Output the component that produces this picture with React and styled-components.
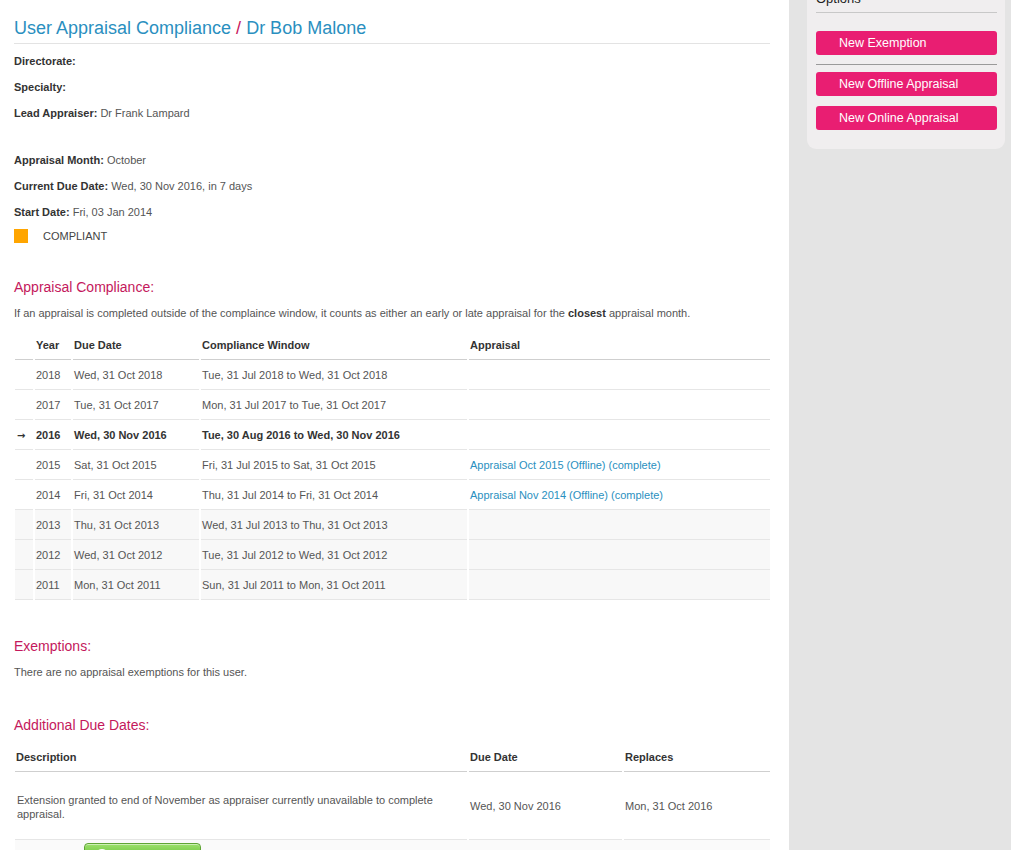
import React from "react";
import styled, { createGlobalStyle } from "styled-components";

const GlobalStyle = createGlobalStyle`
  html, body { margin: 0; padding: 0; background: #fff; }
  body {
    font-family: "Liberation Sans", Arial, Helvetica, sans-serif;
    font-size: 11px;
    color: #555;
  }
`;

const Page = styled.div`
  display: flex;
  height: 850px;
  overflow: hidden;
`;

const Main = styled.main`
  flex: 1;
  min-width: 0;
  padding: 0 19px 0 14px;
`;

const Sidebar = styled.aside`
  width: 222px;
  flex-shrink: 0;
  background: #e4e4e4;
  padding: 0 6px 0 18px;
  box-sizing: border-box;
`;

const Panel = styled.div`
  margin-top: -14px;
  background: #f0eeef;
  border-radius: 0 0 9px 9px;
  padding: 0 8px 19px 9px;
`;

const PanelTitle = styled.div`
  font-size: 13px;
  line-height: 16px;
  color: #222;
  padding: 5px 0 5px;
  border-bottom: 1px solid #c8c8c8;
`;

const PinkButton = styled.button`
  display: block;
  width: 100%;
  height: 24px;
  margin-top: ${(p) => p.$mt}px;
  background: #e91e72;
  border: none;
  border-radius: 3px;
  color: #fff;
  font-family: "Liberation Sans", Arial, sans-serif;
  font-size: 12.5px;
  text-align: left;
  padding: 0 0 0 23px;
  cursor: pointer;
`;

const Separator = styled.div`
  margin-top: 9px;
  border-top: 1px solid #9a9a9a;
`;

const Title = styled.h1`
  margin: 0;
  padding: 17px 0 4px;
  font-size: 18px;
  line-height: 22px;
  font-weight: normal;
  color: #2a8fc0;
  border-bottom: 1px solid #e3e3e3;
`;

const Slash = styled.span`
  color: #c8175d;
`;

const InfoBlock = styled.div`
  margin-top: ${(p) => p.$mt}px;
`;

const InfoLine = styled.div`
  line-height: 26px;
  height: 26px;
  color: #555;
`;

const Label = styled.b`
  color: #333;
`;

const StatusRow = styled.div`
  display: flex;
  align-items: center;
  margin-top: 4px;
  height: 14px;
  gap: 15px;
  color: #444;
`;

const StatusSwatch = styled.span`
  width: 14px;
  height: 14px;
  background: #ffa500;
  display: inline-block;
`;

const SectionHeading = styled.h2`
  margin: ${(p) => p.$mt}px 0 0;
  font-size: 14px;
  line-height: 18px;
  font-weight: normal;
  color: #c4185c;
`;

const Para = styled.p`
  margin: 10px 0 0;
  line-height: 14px;
  color: #555;
`;

const Table = styled.table`
  border-collapse: separate;
  border-spacing: 2px 0;
  table-layout: fixed;
  width: calc(100% + 3px);
  margin: ${(p) => p.$mt}px 0 0 -1px;
`;

const Th = styled.th`
  text-align: left;
  font-weight: bold;
  color: #333;
  padding: 9px 2px 7px 1px;
  line-height: 13px;
  border-bottom: 1px solid #cfcfcf;
  vertical-align: middle;
`;

const Tr = styled.tr`
  background: ${(p) => (p.$shaded ? "#f8f8f8" : "transparent")};
`;

const Td = styled.td`
  padding: 9px 2px 7px 1px;
  line-height: 13px;
  border-bottom: 1px solid #e6e6e6;
  vertical-align: middle;
  color: ${(p) => (p.$strong ? "#333" : "#555")};
  font-weight: ${(p) => (p.$strong ? "bold" : "normal")};
  white-space: nowrap;
`;

const Arrow = styled.span`
  font-family: "DejaVu Sans", sans-serif;
  font-size: 10px;
  font-weight: bold;
  color: #333;
  padding-left: 1px;
`;

const DescTd = styled.td`
  padding: 21px 2px 18px 2px;
  line-height: 14px;
  border-bottom: 1px solid #e6e6e6;
  vertical-align: middle;
  color: #555;
`;

const PlainTd = styled.td`
  padding: 0 2px 0 1px;
  border-bottom: 1px solid #e6e6e6;
  vertical-align: middle;
  color: #555;
`;

const Link = styled.a`
  color: #2a90c0;
  text-decoration: none;
`;

const FooterBar = styled.div`
  background: #fafafa;
  padding: 3px 0 0 69px;
  margin-left: 1px;
`;

const GreenButton = styled.button`
  display: inline-flex;
  align-items: center;
  gap: 6px;
  width: 117px;
  height: 26px;
  border: 1px solid #5fa535;
  border-radius: 4px;
  background: linear-gradient(#9be06a, #6cc23c 55%, #58ad2c);
  box-shadow: inset 0 1px 0 rgba(255, 255, 255, 0.5);
  color: #fff;
  font-family: "Liberation Sans", Arial, sans-serif;
  font-size: 12px;
  font-weight: bold;
  padding: 0 0 0 10px;
  text-shadow: 0 -1px 0 rgba(0, 0, 0, 0.2);
`;

const complianceRows = [
  { year: "2018", due: "Wed, 31 Oct 2018", window: "Tue, 31 Jul 2018 to Wed, 31 Oct 2018" },
  { year: "2017", due: "Tue, 31 Oct 2017", window: "Mon, 31 Jul 2017 to Tue, 31 Oct 2017" },
  { year: "2016", due: "Wed, 30 Nov 2016", window: "Tue, 30 Aug 2016 to Wed, 30 Nov 2016", current: true },
  { year: "2015", due: "Sat, 31 Oct 2015", window: "Fri, 31 Jul 2015 to Sat, 31 Oct 2015", appraisal: "Appraisal Oct 2015 (Offline) (complete)" },
  { year: "2014", due: "Fri, 31 Oct 2014", window: "Thu, 31 Jul 2014 to Fri, 31 Oct 2014", appraisal: "Appraisal Nov 2014 (Offline) (complete)" },
  { year: "2013", due: "Thu, 31 Oct 2013", window: "Wed, 31 Jul 2013 to Thu, 31 Oct 2013", shaded: true },
  { year: "2012", due: "Wed, 31 Oct 2012", window: "Tue, 31 Jul 2012 to Wed, 31 Oct 2012", shaded: true },
  { year: "2011", due: "Mon, 31 Oct 2011", window: "Sun, 31 Jul 2011 to Mon, 31 Oct 2011", shaded: true },
];

export default function App() {
  return (
    <>
      <GlobalStyle />
      <Page>
        <Main>
          <Title>
            User Appraisal Compliance <Slash>/</Slash> Dr Bob Malone
          </Title>

          <InfoBlock $mt={4}>
            <InfoLine><Label>Directorate:</Label></InfoLine>
            <InfoLine><Label>Specialty:</Label></InfoLine>
            <InfoLine><Label>Lead Appraiser:</Label> Dr Frank Lampard</InfoLine>
          </InfoBlock>

          <InfoBlock $mt={21}>
            <InfoLine><Label>Appraisal Month:</Label> October</InfoLine>
            <InfoLine><Label>Current Due Date:</Label> Wed, 30 Nov 2016, in 7 days</InfoLine>
            <InfoLine><Label>Start Date:</Label> Fri, 03 Jan 2014</InfoLine>
          </InfoBlock>

          <StatusRow>
            <StatusSwatch />
            <span>COMPLIANT</span>
          </StatusRow>

          <SectionHeading $mt={35}>Appraisal Compliance:</SectionHeading>
          <Para>
            If an appraisal is completed outside of the complaince window, it counts as either an early or late
            appraisal for the <Label>closest</Label> appraisal month.
          </Para>

          <Table $mt={10}>
            <colgroup>
              <col style={{ width: 18 }} />
              <col style={{ width: 36 }} />
              <col style={{ width: 126 }} />
              <col style={{ width: 266 }} />
              <col />
            </colgroup>
            <thead>
              <tr>
                <Th></Th>
                <Th>Year</Th>
                <Th>Due Date</Th>
                <Th>Compliance Window</Th>
                <Th>Appraisal</Th>
              </tr>
            </thead>
            <tbody>
              {complianceRows.map((r) => (
                <Tr key={r.year} $shaded={r.shaded}>
                  <Td $strong={r.current}>{r.current ? <Arrow>→</Arrow> : ""}</Td>
                  <Td $strong={r.current}>{r.year}</Td>
                  <Td $strong={r.current}>{r.due}</Td>
                  <Td $strong={r.current}>{r.window}</Td>
                  <Td>{r.appraisal ? <Link href="#">{r.appraisal}</Link> : ""}</Td>
                </Tr>
              ))}
            </tbody>
          </Table>

          <SectionHeading $mt={37}>Exemptions:</SectionHeading>
          <Para>There are no appraisal exemptions for this user.</Para>

          <SectionHeading $mt={37}>Additional Due Dates:</SectionHeading>
          <Table $mt={8}>
            <colgroup>
              <col style={{ width: 452 }} />
              <col style={{ width: 153 }} />
              <col />
            </colgroup>
            <thead>
              <tr>
                <Th>Description</Th>
                <Th>Due Date</Th>
                <Th>Replaces</Th>
              </tr>
            </thead>
            <tbody>
              <tr>
                <DescTd>
                  Extension granted to end of November as appraiser currently unavailable to complete appraisal.
                </DescTd>
                <PlainTd>Wed, 30 Nov 2016</PlainTd>
                <PlainTd>Mon, 31 Oct 2016</PlainTd>
              </tr>
            </tbody>
          </Table>
          <FooterBar>
            <GreenButton>
              <svg width="14" height="14" viewBox="0 0 14 14">
                <circle cx="7" cy="7" r="7" fill="#fff" />
                <path d="M7 3.5v7M3.5 7h7" stroke="#5fb534" strokeWidth="2" />
              </svg>
              Add Request
            </GreenButton>
          </FooterBar>
        </Main>

        <Sidebar>
          <Panel>
            <PanelTitle>Options</PanelTitle>
            <PinkButton $mt={18}>New Exemption</PinkButton>
            <Separator />
            <PinkButton $mt={7}>New Offline Appraisal</PinkButton>
            <PinkButton $mt={10}>New Online Appraisal</PinkButton>
          </Panel>
        </Sidebar>
      </Page>
    </>
  );
}
